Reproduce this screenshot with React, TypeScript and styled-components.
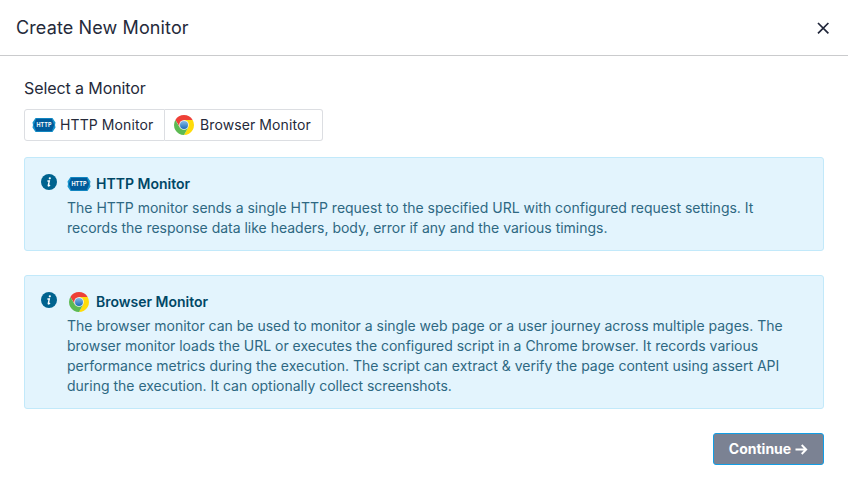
import React from "react";
import styled, { createGlobalStyle, css } from "styled-components";

const GlobalStyle = createGlobalStyle`
  *, *::before, *::after { box-sizing: border-box; }
  body {
    margin: 0;
    background: #fff;
    color: #252a3a;
    font-family: Inter, "Liberation Sans", sans-serif;
    font-size: 14px;
  }
`;

const Dialog = styled.section`
  height: 489px;
  display: flex;
  flex-direction: column;
  overflow: hidden;
`;

const Header = styled.header`
  height: 56px;
  padding: 0 16px;
  display: flex;
  align-items: center;
  justify-content: space-between;
  border-bottom: 1px solid #cacbcd;
`;

const Title = styled.h1`
  margin: 0;
  font-size: 18px;
  line-height: 28px;
  font-weight: 400;
  letter-spacing: 0.12px;
`;

const CloseButton = styled.button`
  width: 18px;
  height: 18px;
  padding: 0;
  border: 0;
  background: none;
  display: flex;
  align-items: center;
  justify-content: center;
  color: #20263a;
`;

const Body = styled.main`
  padding: 20px 24px 0;
  display: flex;
  flex-direction: column;
`;

const Label = styled.h2`
  margin: 0 0 9px;
  font-size: 16px;
  line-height: 24px;
  font-weight: 400;
  letter-spacing: -0.09px;
`;

const Options = styled.div`
  display: flex;
  height: 32px;
  margin-bottom: 16px;
`;

const Option = styled.button<{ $width: number; $last?: boolean }>`
  width: ${(p) => p.$width}px;
  padding: 0 0 0 7px;
  display: flex;
  align-items: center;
  gap: 4px;
  border: 1px solid #dcdee2;
  border-radius: ${(p) => (p.$last ? "0 3px 3px 0" : "3px 0 0 3px")};
  ${(p) => p.$last && css`border-left: 0;`}
  background: #fff;
  color: #252a3a;
  font: 400 14px/20px Inter, "Liberation Sans", sans-serif;
  letter-spacing: 0.1px;
  white-space: nowrap;
`;

const IconSlot = styled.span`
  width: 24px;
  height: 24px;
  flex: none;
  display: flex;
  align-items: center;
  justify-content: center;
`;

const Notice = styled.article<{ $height: number }>`
  height: ${(p) => p.$height}px;
  margin-bottom: 24px;
  padding: 16px 16px 0;
  display: flex;
  gap: 10px;
  border: 1px solid #c2e9fa;
  border-radius: 3px;
  background: #e3f4fd;
`;

const NoticeContent = styled.div`
  flex: 1;
`;

const NoticeTitle = styled.h3`
  margin: -2px 0 2px;
  height: 24px;
  display: flex;
  align-items: center;
  gap: 5px;
  color: #004766;
  font-size: 14px;
  font-weight: 600;
`;

const TitleText = styled.span`
  height: 20px;
  line-height: 20px;
`;

const NoticeText = styled.p`
  margin: 0;
  color: #2e6882;
  line-height: 20px;
  letter-spacing: -0.008px;
  white-space: pre-line;
`;

const Footer = styled.footer`
  display: flex;
  justify-content: flex-end;
`;

const ContinueButton = styled.button`
  width: 111px;
  height: 32px;
  padding: 0;
  display: flex;
  align-items: center;
  justify-content: center;
  gap: 3px;
  border: 1px solid #129ee5;
  border-radius: 3px;
  background: #7b8293;
  color: #fff;
  font: 700 14px/20px Inter, "Liberation Sans", sans-serif;
`;

const BadgeText = styled.text`
  font: 700 5.5px Inter, sans-serif;
`;

const InfoSlot = styled.span`
  width: 16px;
  height: 16px;
  flex: none;
`;

function HttpIcon() {
  return (
    <IconSlot>
      <svg width="24" height="24" viewBox="0 0 24 24" aria-hidden="true">
        <path d="M3.5 5h17l3 4.5-.5 2.5.5 2.5-3 4.5h-17l-3-4.5L1 12l-.5-2.5z" fill="#1793cc" />
        <path d="M4.2 5.8h15.6l2.4 6.2-2.4 6.2H4.2L1.8 12z" fill="#005b9b" />
        <BadgeText x="12" y="14" textAnchor="middle" textLength="15" lengthAdjust="spacingAndGlyphs" fill="#fff">HTTP</BadgeText>
      </svg>
    </IconSlot>
  );
}

function ChromeIcon({ id }: { id: string }) {
  return (
    <IconSlot>
      <svg width="20" height="20" viewBox="0 0 20 20" aria-hidden="true">
        <defs>
          <linearGradient id={id} x1="0" y1="0" x2="0" y2="1">
            <stop stopColor="#86bde7" />
            <stop offset="1" stopColor="#1b69b9" />
          </linearGradient>
        </defs>
        <path d="M1.34 5A10 10 0 0 1 18.66 5H10L6 12.2z" fill="#ee4037" />
        <path d="M18.66 5A10 10 0 0 1 10 20L14.2 12.6 10 5z" fill="#ffdc0a" />
        <path d="M10 20A10 10 0 0 1 1.34 5L5.7 12.5l8.5.1z" fill="#5dba52" />
        <circle cx="10" cy="10" r="4.8" fill="#f2f5f8" />
        <circle cx="10" cy="10" r="4" fill={`url(#${id})`} />
      </svg>
    </IconSlot>
  );
}

function InfoIcon() {
  return (
    <InfoSlot>
      <svg width="16" height="16" viewBox="0 0 16 16" aria-label="Information">
        <circle cx="8" cy="8" r="8" fill="#00638f" />
        <circle cx="8.8" cy="4.3" r="1.1" fill="#fff" />
        <path d="M6.4 7h1.9L7.3 11.3q-.2.8.5.6l1.3-.7" fill="none" stroke="#fff" strokeWidth="1.4" />
      </svg>
    </InfoSlot>
  );
}

export default function App() {
  return (
    <>
      <GlobalStyle />
      <Dialog>
        <Header>
          <Title>Create New Monitor</Title>
          <CloseButton aria-label="Close">
            <svg width="12" height="12" viewBox="0 0 12 12" fill="none" stroke="currentColor" strokeWidth="1.7">
              <path d="m1 1 10.4 10.4M11.4 1 1 11.4" />
            </svg>
          </CloseButton>
        </Header>
        <Body>
          <Label>Select a Monitor</Label>
          <Options>
            <Option $width={141}><HttpIcon />HTTP Monitor</Option>
            <Option $width={158} $last><ChromeIcon id="chrome-option" />Browser Monitor</Option>
          </Options>
          <Notice $height={94}>
            <InfoIcon />
            <NoticeContent>
              <NoticeTitle><HttpIcon /><TitleText>HTTP Monitor</TitleText></NoticeTitle>
              <NoticeText>{"The HTTP monitor sends a single HTTP request to the specified URL with configured request settings. It\nrecords the response data like headers, body, error if any and the various timings."}</NoticeText>
            </NoticeContent>
          </Notice>
          <Notice $height={134}>
            <InfoIcon />
            <NoticeContent>
              <NoticeTitle><ChromeIcon id="chrome-notice" /><TitleText>Browser Monitor</TitleText></NoticeTitle>
              <NoticeText>{"The browser monitor can be used to monitor a single web page or a user journey across multiple pages. The\nbrowser monitor loads the URL or executes the configured script in a Chrome browser. It records various\nperformance metrics during the execution. The script can extract & verify the page content using assert API\nduring the execution. It can optionally collect screenshots."}</NoticeText>
            </NoticeContent>
          </Notice>
          <Footer>
            <ContinueButton>
              Continue
              <svg width="14" height="14" viewBox="0 0 14 14" fill="none" stroke="currentColor" strokeWidth="1.9">
                <path d="M1.5 7.5h10.5M7.7 3 12.2 7.5l-4.5 4.5" />
              </svg>
            </ContinueButton>
          </Footer>
        </Body>
      </Dialog>
    </>
  );
}
